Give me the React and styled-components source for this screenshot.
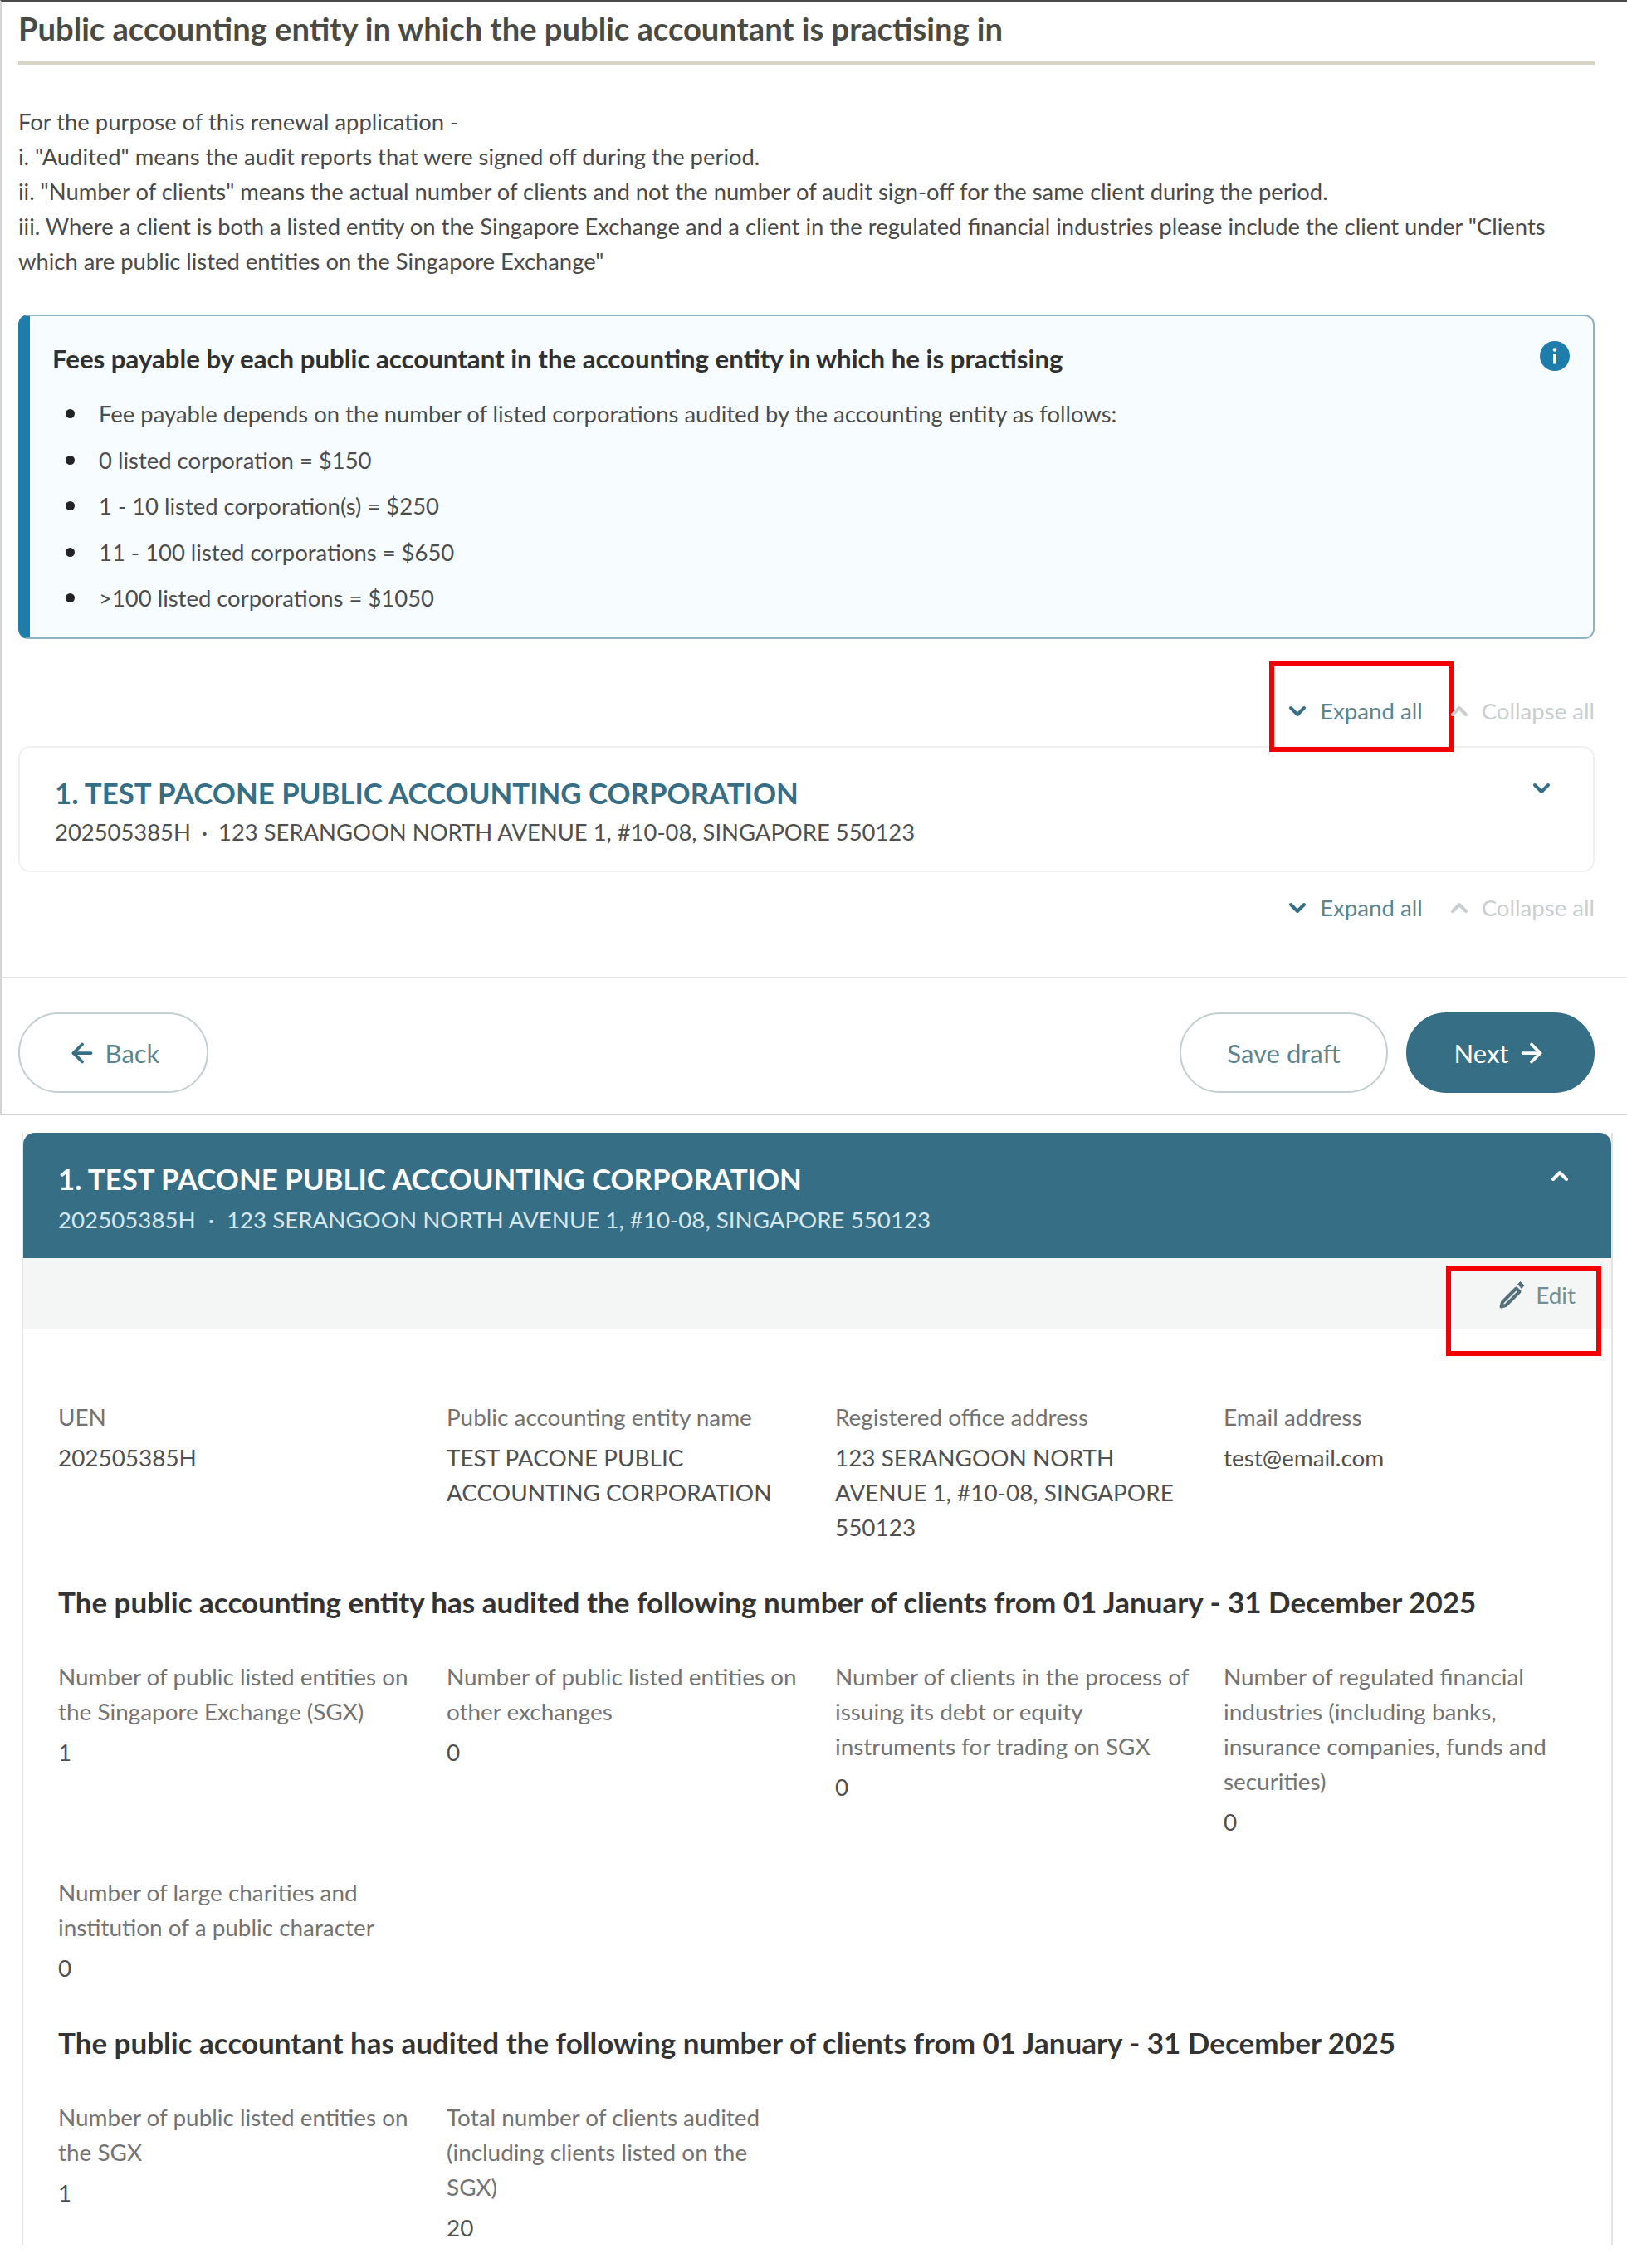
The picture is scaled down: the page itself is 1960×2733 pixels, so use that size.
import styled, { createGlobalStyle } from "styled-components";
import { ChevronDown, ChevronUp, ArrowLeft, ArrowRight } from "lucide-react";

const GlobalStyle = createGlobalStyle`
  html, body {
    margin: 0;
    padding: 0;
    background: #ffffff;
  }
  body {
    font-family: "Lato", "Open Sans", sans-serif;
    font-size: 27.9px;
    line-height: 42px;
    color: #454545;
  }
  * {
    box-sizing: border-box;
  }
`;

const Page = styled.div`
  width: 1960px;
  height: 2733px;
  overflow: hidden;
`;

const FormPanel = styled.section`
  height: 1179px;
  padding: 0 39px 0 20px;
  border-top: 2px solid #4a4a4a;
  border-left: 2px solid #d4d4d4;
  border-bottom: 2px solid #e8e8e8;
`;

const PageTitle = styled.h2`
  margin: 0;
  height: 76px;
  padding-top: 9px;
  font-size: 38.15px;
  line-height: 46px;
  font-weight: 700;
  color: #4a4a44;
  border-bottom: 4px solid #d6d4c4;
`;

const Intro = styled.p`
  margin: 48px 0 0;
  font-size: 27.4px;
  color: #4a4a4a;
`;

const FeeBox = styled.div`
  margin-top: 43px;
  height: 391px;
  padding: 30px 28px 0 27px;
  background: #f6fcff;
  border: 2px solid #8db4c0;
  border-left: 14px solid #1f7dab;
  border-radius: 12px;
`;

const FeeHead = styled.div`
  display: flex;
  justify-content: space-between;
  align-items: center;

  svg {
    margin-top: -6px;
  }
`;

const FeeTitle = styled.h3`
  margin: 0;
  font-size: 31.2px;
  line-height: 42px;
  font-weight: 700;
  color: #303030;
`;

const FeeList = styled.ul`
  margin: 25px 0 0;
  padding: 0 0 0 56px;
  list-style: none;
  font-size: 27.45px;
  color: #4c4c4c;

  li {
    position: relative;
    margin-bottom: 13.6px;
  }
  li::before {
    content: "";
    position: absolute;
    left: -40px;
    top: 15px;
    width: 11px;
    height: 11px;
    border-radius: 50%;
    background: #222222;
  }
`;

const ToggleRow = styled.div`
  display: flex;
  justify-content: flex-end;
  gap: 28px;
  margin: ${({ $top }) => $top}px 0 21px;
  height: 42px;
  font-size: 27.6px;
`;

const ToggleButton = styled.span`
  position: relative;
  display: flex;
  align-items: center;
  gap: 11px;
  color: ${({ $off }) => ($off ? "#c9cfd1" : "#5c8590")};

  svg {
    color: ${({ $off }) => ($off ? "#c9cfd1" : "#366e85")};
  }
`;

const RedMark = styled.span`
  position: absolute;
  top: ${({ $t }) => $t}px;
  right: ${({ $r }) => $r}px;
  bottom: ${({ $b }) => $b}px;
  left: ${({ $l }) => $l}px;
  border: 6px solid #f40000;
`;

const EntityHead = styled.div`
  display: flex;
  justify-content: space-between;
  align-items: flex-start;
  height: ${({ $open }) => ($open ? 151 : 152)}px;
  padding: ${({ $open }) => ($open ? "33px 46px 0 42px" : "32px 46px 0 42px")};
  background: ${({ $open }) => ($open ? "#366e85" : "#ffffff")};
  color: ${({ $open }) => ($open ? "#ffffff" : "#366e85")};
  border: ${({ $open }) => ($open ? "none" : "2px solid #f0f0f0")};
  border-radius: ${({ $open }) => ($open ? "14px 14px 0 0" : "14px")};

  > svg {
    margin-top: ${({ $open }) => ($open ? 3 : 1)}px;
  }
`;

const EntityName = styled.div`
  font-size: 34.8px;
  line-height: 46px;
  font-weight: 700;
`;

const EntityMeta = styled.div`
  margin-top: ${({ $open }) => ($open ? 5 : 3)}px;
  font-size: ${({ $open }) => ($open ? 27.7 : 27.4)}px;
  color: ${({ $open }) => ($open ? "#d5e6ec" : "#4f4f4f")};
`;

const MetaDot = styled.span`
  margin: 0 ${({ $open }) => ($open ? 15 : 13)}px;
`;

const Footer = styled.footer`
  display: flex;
  justify-content: space-between;
  padding: 41px 39px 25px 20px;
  border-left: 2px solid #d4d4d4;
  border-bottom: 2px solid #d0d0d0;
`;

const FooterGroup = styled.div`
  display: flex;
  gap: 22px;
`;

const PillButton = styled.button`
  display: flex;
  align-items: center;
  justify-content: center;
  gap: 10px;
  width: ${({ $w }) => $w}px;
  height: 97px;
  padding: 0;
  font: inherit;
  font-size: 31px;
  color: ${({ $solid }) => ($solid ? "#ffffff" : "#5c8590")};
  background: ${({ $solid }) => ($solid ? "#366e85" : "#ffffff")};
  border: 2px solid ${({ $solid }) => ($solid ? "#366e85" : "#c3cfd2")};
  border-radius: 49px;

  svg {
    color: ${({ $solid }) => ($solid ? "#ffffff" : "#366e85")};
  }
`;

const DetailPanel = styled.section`
  margin: 21px 17px 0 26px;
  border-left: 2px solid #e4e4e4;
  border-right: 2px solid #e4e4e4;
`;

const EditBar = styled.div`
  display: flex;
  justify-content: flex-end;
  height: 85px;
  padding: 23px 43px 0 0;
  background: #f4f5f5;
`;

const EditButton = styled.span`
  position: relative;
  display: flex;
  align-items: center;
  height: 42px;
  gap: 13px;
  color: #6d909c;

  svg {
    color: #56707c;
  }
`;

const DetailBody = styled.div`
  padding: 85px 0 0 42px;
`;

const FieldGrid = styled.div`
  display: grid;
  grid-template-columns: repeat(4, 468px);
  row-gap: 43px;
`;

const Field = styled.div`
  padding-right: 32px;
`;

const FieldLabel = styled.div`
  white-space: pre-line;
  color: #737373;
`;

const FieldValue = styled.div`
  margin-top: 7px;
  color: #505050;
`;

const SubHeading = styled.h4`
  margin: 48px 0;
  font-size: 35px;
  line-height: 42px;
  font-weight: 700;
  color: #333333;
`;

const InfoIcon = () => (
  <svg width="36" height="36" viewBox="0 0 36 36">
    <circle cx="18" cy="18" r="18" fill="#1f7dab" />
    <circle cx="18" cy="10.5" r="2.3" fill="#ffffff" />
    <rect x="16" y="15" width="4" height="12.5" rx="1" fill="#ffffff" />
  </svg>
);

const PencilIcon = () => (
  <svg width="32" height="34" viewBox="0 0 32 34" fill="none">
    <path
      d="M21.5 9.5 L5 26 L3.5 31.5 L9 30 L25.5 13.5 Z"
      stroke="currentColor"
      strokeWidth="4"
      strokeLinejoin="round"
    />
    <path d="M23.5 4.5 L26.5 1.5 L31 6 L28 9.5 Z" fill="currentColor" stroke="currentColor" strokeWidth="1" />
  </svg>
);

const fees = [
  "Fee payable depends on the number of listed corporations audited by the accounting entity as follows:",
  "0 listed corporation = $150",
  "1 - 10 listed corporation(s) = $250",
  "11 - 100 listed corporations = $650",
  ">100 listed corporations = $1050",
];

const entityName = "1. TEST PACONE PUBLIC ACCOUNTING CORPORATION";

const entityFields = [
  { label: "UEN", value: "202505385H" },
  { label: "Public accounting entity name", value: "TEST PACONE PUBLIC ACCOUNTING CORPORATION" },
  { label: "Registered office address", value: "123 SERANGOON NORTH AVENUE 1, #10-08, SINGAPORE 550123" },
  { label: "Email address", value: "test@email.com" },
];

const entityAudit = [
  { label: "Number of public listed entities on the Singapore Exchange (SGX)", value: "1" },
  { label: "Number of public listed entities on other exchanges", value: "0" },
  { label: "Number of clients in the process of issuing its debt or equity instruments for trading on SGX", value: "0" },
  { label: "Number of regulated financial industries (including banks, insurance companies, funds and securities)", value: "0" },
  { label: "Number of large charities and institution of a public character", value: "0" },
];

const accountantAudit = [
  { label: "Number of public listed entities on the SGX", value: "1" },
  { label: "Total number of clients audited (including clients listed on the\nSGX)", value: "20" },
];

function Fields({ items }) {
  return (
    <FieldGrid>
      {items.map((item) => (
        <Field key={item.label}>
          <FieldLabel>{item.label}</FieldLabel>
          <FieldValue>{item.value}</FieldValue>
        </Field>
      ))}
    </FieldGrid>
  );
}

function Toggles({ top, marked }) {
  return (
    <ToggleRow $top={top}>
      <ToggleButton>
        <ChevronDown size={32} strokeWidth={3} />
        Expand all
        {marked && <RedMark $t={-39} $r={-37} $b={-28} $l={-18} />}
      </ToggleButton>
      <ToggleButton $off>
        <ChevronUp size={32} strokeWidth={3} />
        Collapse all
      </ToggleButton>
    </ToggleRow>
  );
}

function EntityHeader({ open }) {
  const Chevron = open ? ChevronUp : ChevronDown;
  return (
    <EntityHead $open={open}>
      <div>
        <EntityName>{entityName}</EntityName>
        <EntityMeta $open={open}>
          202505385H<MetaDot $open={open}>·</MetaDot>123 SERANGOON NORTH AVENUE 1, #10-08, SINGAPORE 550123
        </EntityMeta>
      </div>
      <Chevron size={32} strokeWidth={3} color={open ? "#ffffff" : "#366e85"} />
    </EntityHead>
  );
}

export default function App() {
  return (
    <Page>
      <GlobalStyle />
      <FormPanel>
        <PageTitle>Public accounting entity in which the public accountant is practising in</PageTitle>
        <Intro>
          For the purpose of this renewal application -<br />
          i. "Audited" means the audit reports that were signed off during the period.<br />
          ii. "Number of clients" means the actual number of clients and not the number of audit sign-off for the same client during the period.<br />
          iii. Where a client is both a listed entity on the Singapore Exchange and a client in the regulated financial industries please include the client under "Clients which are public listed entities on the Singapore Exchange"
        </Intro>
        <FeeBox>
          <FeeHead>
            <FeeTitle>Fees payable by each public accountant in the accounting entity in which he is practising</FeeTitle>
            <InfoIcon />
          </FeeHead>
          <FeeList>
            {fees.map((fee) => (
              <li key={fee}>{fee}</li>
            ))}
          </FeeList>
        </FeeBox>
        <Toggles top={66} marked />
        <EntityHeader />
        <Toggles top={22} />
      </FormPanel>
      <Footer>
        <PillButton $w={229}>
          <ArrowLeft size={36} strokeWidth={2.5} />
          Back
        </PillButton>
        <FooterGroup>
          <PillButton $w={251}>Save draft</PillButton>
          <PillButton $w={227} $solid>
            Next
            <ArrowRight size={36} strokeWidth={2.5} />
          </PillButton>
        </FooterGroup>
      </Footer>
      <DetailPanel>
        <EntityHeader open />
        <EditBar>
          <EditButton>
            <PencilIcon />
            Edit
            <RedMark $t={-13} $r={-31} $b={-53} $l={-63} />
          </EditButton>
        </EditBar>
        <DetailBody>
          <Fields items={entityFields} />
          <SubHeading>The public accounting entity has audited the following number of clients from 01 January - 31 December 2025</SubHeading>
          <Fields items={entityAudit} />
          <SubHeading>The public accountant has audited the following number of clients from 01 January - 31 December 2025</SubHeading>
          <Fields items={accountantAudit} />
        </DetailBody>
      </DetailPanel>
    </Page>
  );
}
